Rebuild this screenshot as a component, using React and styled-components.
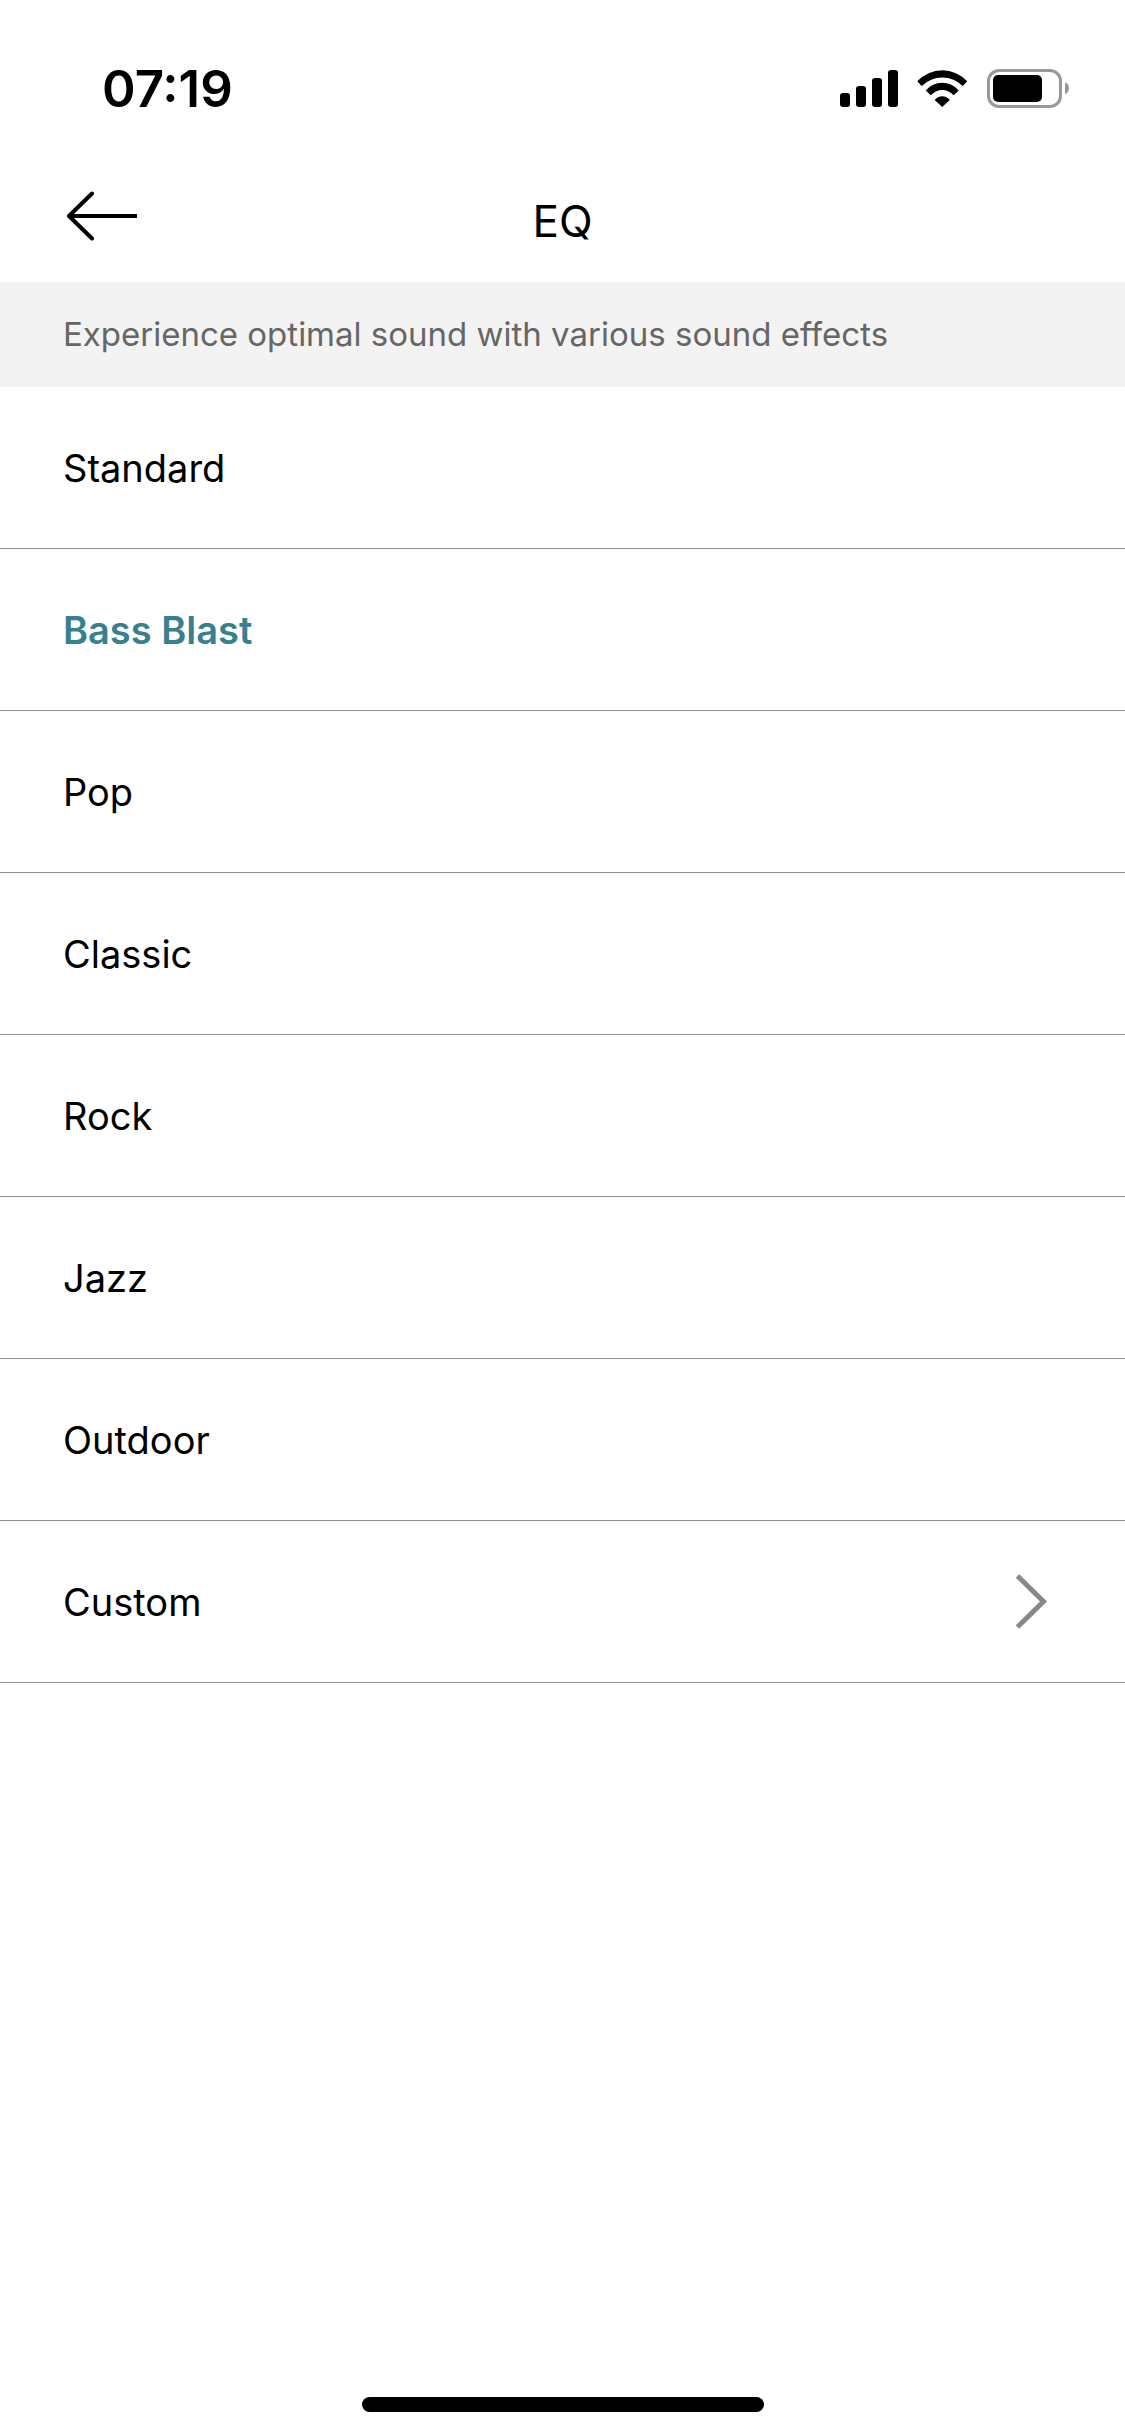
// App.jsx
import React, { useState } from 'react';
import styled, { createGlobalStyle } from 'styled-components';

const GlobalStyle = createGlobalStyle`
  * {
    box-sizing: border-box;
  }
  body {
    margin: 0;
    background: #fff;
    color: #000;
    font-family: Inter, 'Liberation Sans', sans-serif;
  }
`;

const Screen = styled.div`
  min-height: 100vh;
  display: flex;
  flex-direction: column;
`;

const StatusBar = styled.div`
  height: 177px;
  padding: 0 56px 0 102px;
  display: flex;
  align-items: center;
  justify-content: space-between;
`;

const Time = styled.time`
  font-size: 51px;
  font-weight: 600;
`;

const StatusIcons = styled.div`
  display: flex;
  align-items: center;
  gap: 19px;

  svg {
    display: block;
  }
`;

const Header = styled.header`
  height: 105px;
  padding: 0 64px 18px;
  display: grid;
  grid-template-columns: 1fr auto 1fr;
  align-items: center;
`;

const BackButton = styled.button`
  justify-self: start;
  padding: 0;
  border: none;
  background: none;
  cursor: pointer;

  svg {
    display: block;
  }
`;

const Title = styled.h1`
  margin: 0;
  font-size: 44px;
  font-weight: 400;
`;

const Description = styled.p`
  margin: 0;
  padding: 32px 63px;
  background: #f3f3f3;
  color: #666;
  font-size: 33px;
  line-height: 41px;
`;

const PresetList = styled.ul`
  flex: 1;
  margin: 0;
  padding: 0;
  list-style: none;
`;

const PresetItem = styled.li`
  border-bottom: 1px solid #919191;
`;

const PresetButton = styled.button`
  width: 100%;
  height: 161px;
  padding: 0 75px 0 63px;
  display: flex;
  align-items: center;
  justify-content: space-between;
  border: none;
  background: none;
  color: ${({ $active }) => ($active ? '#38808f' : '#000')};
  font-family: inherit;
  font-size: 38px;
  font-weight: ${({ $active }) => ($active ? 600 : 400)};
  text-align: left;
  cursor: pointer;
`;

const HomeIndicator = styled.div`
  width: 402px;
  height: 15px;
  margin: 0 auto 24px;
  border-radius: 8px;
  background: #000;
`;

const SignalIcon = () => (
  <svg width="58" height="37" viewBox="0 0 58 37" aria-hidden="true">
    <rect x="0" y="23" width="10" height="14" rx="3" />
    <rect x="16" y="16" width="10" height="21" rx="3" />
    <rect x="32" y="8" width="10" height="29" rx="3" />
    <rect x="48" y="0" width="10" height="37" rx="3" />
  </svg>
);

const WifiIcon = () => (
  <svg width="51" height="37" viewBox="0 0 51 37" aria-hidden="true">
    <path d="M0.3 11.2A34 34 0 0 1 50.2 11.2L45.8 16.1A29 29 0 0 0 4.7 16.1Z" />
    <path d="M8.8 20.4A21.5 21.5 0 0 1 41.7 20.4L36.7 25.3A15 15 0 0 0 13.8 25.3Z" />
    <path d="M17.7 30A9.5 9.5 0 0 1 32.8 30L25.2 37Z" />
  </svg>
);

const BatteryIcon = () => (
  <svg width="82" height="39" viewBox="0 0 82 39" aria-hidden="true">
    <rect x="1.5" y="1.5" width="72" height="36" rx="10.5" fill="none" stroke="#999" strokeWidth="3" />
    <rect x="6" y="6" width="49" height="27" rx="5" />
    <path d="M78 13.3C83.3 15.5 83.3 23.1 78 25.3Z" fill="#999" />
  </svg>
);

const BackIcon = () => (
  <svg width="76" height="60" viewBox="0 0 76 60" fill="none" stroke="#000" strokeWidth="4" aria-hidden="true">
    <path d="M5 25H73" />
    <path d="M28 2.5L5 25L28 47.5" strokeLinecap="round" strokeLinejoin="round" />
  </svg>
);

const ChevronIcon = () => (
  <svg width="36" height="60" viewBox="0 0 36 60" fill="none" stroke="#888" strokeWidth="5" aria-hidden="true">
    <path d="M3.5 4L29.5 29.5L3.5 55" />
  </svg>
);

const presets = [
  { name: 'Standard' },
  { name: 'Bass Blast' },
  { name: 'Pop' },
  { name: 'Classic' },
  { name: 'Rock' },
  { name: 'Jazz' },
  { name: 'Outdoor' },
  { name: 'Custom', hasDetail: true },
];

const App = () => {
  const [selected, setSelected] = useState('Bass Blast');

  return (
    <Screen>
      <GlobalStyle />
      <StatusBar>
        <Time>07:19</Time>
        <StatusIcons>
          <SignalIcon />
          <WifiIcon />
          <BatteryIcon />
        </StatusIcons>
      </StatusBar>
      <Header>
        <BackButton type="button" aria-label="Back">
          <BackIcon />
        </BackButton>
        <Title>EQ</Title>
      </Header>
      <Description>Experience optimal sound with various sound effects</Description>
      <PresetList>
        {presets.map(({ name, hasDetail }) => (
          <PresetItem key={name}>
            <PresetButton
              type="button"
              $active={name === selected}
              aria-pressed={name === selected}
              onClick={() => setSelected(name)}
            >
              {name}
              {hasDetail && <ChevronIcon />}
            </PresetButton>
          </PresetItem>
        ))}
      </PresetList>
      <HomeIndicator />
    </Screen>
  );
};

export default App;
